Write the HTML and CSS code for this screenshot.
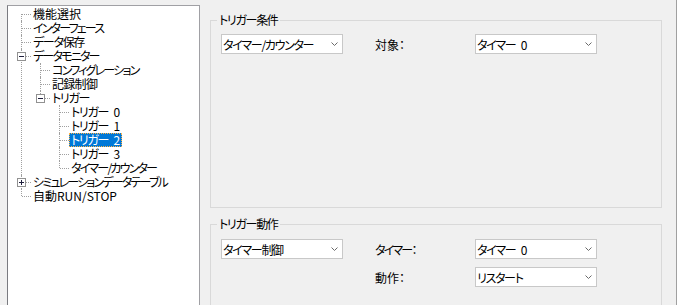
FILE: index.html
```html
<!DOCTYPE html>
<html lang="ja">
<head>
<meta charset="utf-8">
<title>Trigger</title>
<link rel="stylesheet" href="styles.css">
</head>
<body>
<div class="app">
  <div class="tree-panel">
    <ul class="tree root">
      <li><div class="row"><span class="label wide">機能選択</span></div></li>
      <li><div class="row"><span class="label tight">インターフェース</span></div></li>
      <li><div class="row"><span class="label">データ保存</span></div></li>
      <li><div class="row"><span class="toggle minus"></span><span class="label tight">データモニター</span></div>
        <ul class="tree">
          <li><div class="row"><span class="label tight">コンフィグレーション</span></div></li>
          <li><div class="row"><span class="label semi">記録制御</span></div></li>
          <li><div class="row"><span class="toggle minus"></span><span class="label">トリガー</span></div>
            <ul class="tree">
              <li><div class="row"><span class="label">トリガー 0</span></div></li>
              <li><div class="row"><span class="label">トリガー 1</span></div></li>
              <li><div class="row"><span class="label selected">トリガー 2</span></div></li>
              <li><div class="row"><span class="label">トリガー 3</span></div></li>
              <li><div class="row"><span class="label tight">タイマー/カウンター</span></div></li>
            </ul>
          </li>
        </ul>
      </li>
      <li><div class="row"><span class="toggle plus"></span><span class="label tight">シミュレーションデータテーブル</span></div></li>
      <li><div class="row"><span class="label wide">自動RUN/STOP</span></div></li>
    </ul>
  </div>

  <div class="settings">
    <fieldset class="group group-cond">
      <legend>トリガー条件</legend>
      <div class="grid">
        <div class="combo"><span>タイマー/カウンター</span><svg class="chev" width="7" height="4" viewBox="0 0 7 4"><path d="M0.5 0.5 L3.5 3.5 L6.5 0.5"/></svg></div>
        <span class="field-label wide">対象：</span>
        <div class="combo"><span>タイマー 0</span><svg class="chev" width="7" height="4" viewBox="0 0 7 4"><path d="M0.5 0.5 L3.5 3.5 L6.5 0.5"/></svg></div>
      </div>
    </fieldset>

    <fieldset class="group group-action">
      <legend>トリガー動作</legend>
      <div class="grid">
        <div class="combo"><span>タイマー制御</span><svg class="chev" width="7" height="4" viewBox="0 0 7 4"><path d="M0.5 0.5 L3.5 3.5 L6.5 0.5"/></svg></div>
        <span class="field-label tight">タイマー：</span>
        <div class="combo"><span>タイマー 0</span><svg class="chev" width="7" height="4" viewBox="0 0 7 4"><path d="M0.5 0.5 L3.5 3.5 L6.5 0.5"/></svg></div>
        <span class="empty"></span>
        <span class="field-label wide">動作：</span>
        <div class="combo"><span>リスタート</span><svg class="chev" width="7" height="4" viewBox="0 0 7 4"><path d="M0.5 0.5 L3.5 3.5 L6.5 0.5"/></svg></div>
      </div>
    </fieldset>
  </div>
</div>
</body>
</html>
```

FILE: styles.css
```css
html, body {
  margin: 0;
  padding: 0;
  background: #f0f0f0;
}

body {
  font-family: "Noto Sans CJK JP", "Noto Sans", sans-serif;
  font-size: 12px;
  color: #000;
  font-feature-settings: "palt";
  letter-spacing: -1.3px;
  word-spacing: 4px;
}

.tight {
  letter-spacing: -1.8px;
}

.semi {
  letter-spacing: -0.7px;
}

.wide {
  letter-spacing: 0;
}

.app {
  display: flex;
  gap: 10px;
  width: 677px;
  height: 305px;
  box-sizing: border-box;
  padding: 5px 0 0 7px;
  border-right: 1px solid #a0a0a0;
  overflow: hidden;
}

/* ---------- tree ---------- */
.tree-panel {
  width: 193px;
  height: 320px;
  flex: none;
  box-sizing: border-box;
  background: #fff;
  border: 1px solid #a0a0a4;
  border-left-color: #7a7b80;
  padding-top: 1px;
}

.tree {
  list-style: none;
  margin: 0;
  padding: 0;
}

.tree .tree {
  padding-left: 19px;
}

.tree li {
  position: relative;
}

.tree li::before {
  content: "";
  position: absolute;
  left: 13px;
  top: 0;
  bottom: 0;
  border-left: 1px dotted #a0a0a0;
}

.tree li:last-child::before {
  bottom: auto;
  height: 7px;
}

.root > li:first-child::before {
  top: 7px;
}

.row {
  position: relative;
  height: 14px;
  padding-left: 23px;
  display: flex;
  align-items: center;
}

.row::before {
  content: "";
  position: absolute;
  left: 14px;
  top: 7px;
  width: 9px;
  border-top: 1px dotted #a0a0a0;
}

.label {
  display: block;
  height: 14px;
  line-height: 14px;
  padding: 0 3px 0 2px;
  white-space: nowrap;
}

.label.selected {
  background: #0078d7;
  color: #fff;
  outline: 1px dotted #ffb347;
  outline-offset: -1px;
}

.toggle {
  position: absolute;
  left: 9px;
  top: 3px;
  width: 9px;
  height: 9px;
  box-sizing: border-box;
  border: 1px solid #919191;
  background: #fff;
  z-index: 1;
}

.toggle::after {
  content: "";
  position: absolute;
  left: 1px;
  top: 3px;
  width: 5px;
  height: 1px;
  background: #1e1e3c;
}

.toggle.plus::before {
  content: "";
  position: absolute;
  left: 3px;
  top: 1px;
  width: 1px;
  height: 5px;
  background: #1e1e3c;
}

/* ---------- settings ---------- */
.settings {
  display: flex;
  flex-direction: column;
  padding-top: 8px;
  width: 452px;
  flex: none;
}

.group {
  margin: 0;
  padding: 7px 10px 0 10px;
  border: 1px solid #d9d9d9;
  min-width: 0;
}

.group legend {
  padding: 0 2px;
  margin-left: -4px;
  line-height: 14px;
  height: 14px;
}

.group-action {
  margin-top: 9px;
  padding-top: 8px;
}

.grid {
  display: grid;
  grid-template-columns: 154px 100px 122px;
  grid-auto-rows: 20px;
  row-gap: 8px;
  align-items: center;
}

.group-cond .grid {
  height: 173px;
  align-content: start;
}

.group-action .grid {
  height: 80px;
  align-content: start;
}

.field-label {
  white-space: nowrap;
}

.combo {
  width: 122px;
  height: 20px;
  box-sizing: border-box;
  border: 1px solid #c8c8c8;
  background: #fff;
  display: flex;
  align-items: center;
  justify-content: space-between;
  padding: 0 4px 0 1px;
  white-space: nowrap;
}

.chev {
  display: block;
  flex: none;
}

.chev path {
  fill: none;
  stroke: #6a6a6a;
  stroke-width: 1;
}
```
